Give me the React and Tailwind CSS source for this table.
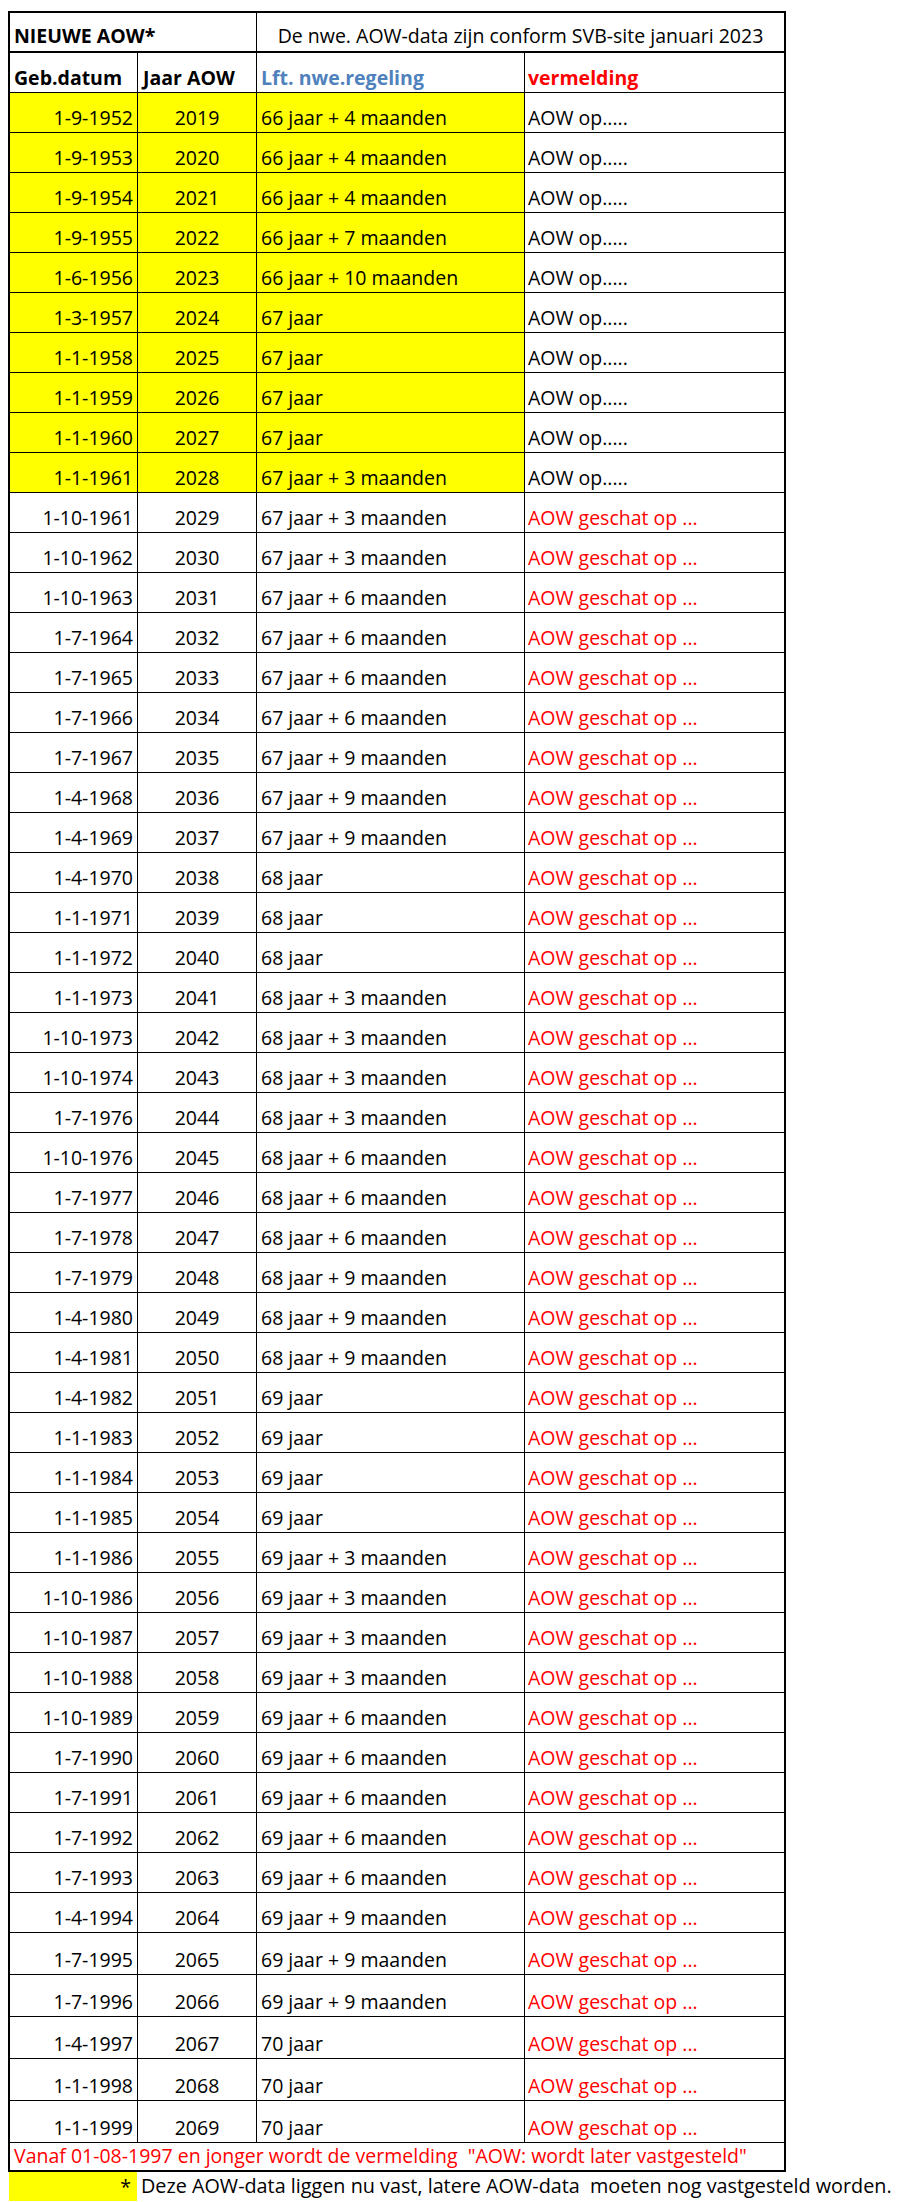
const ROWS = [
  ["1-9-1952", "2019", "66 jaar + 4 maanden"],
  ["1-9-1953", "2020", "66 jaar + 4 maanden"],
  ["1-9-1954", "2021", "66 jaar + 4 maanden"],
  ["1-9-1955", "2022", "66 jaar + 7 maanden"],
  ["1-6-1956", "2023", "66 jaar + 10 maanden"],
  ["1-3-1957", "2024", "67 jaar"],
  ["1-1-1958", "2025", "67 jaar"],
  ["1-1-1959", "2026", "67 jaar"],
  ["1-1-1960", "2027", "67 jaar"],
  ["1-1-1961", "2028", "67 jaar + 3 maanden"],
  ["1-10-1961", "2029", "67 jaar + 3 maanden"],
  ["1-10-1962", "2030", "67 jaar + 3 maanden"],
  ["1-10-1963", "2031", "67 jaar + 6 maanden"],
  ["1-7-1964", "2032", "67 jaar + 6 maanden"],
  ["1-7-1965", "2033", "67 jaar + 6 maanden"],
  ["1-7-1966", "2034", "67 jaar + 6 maanden"],
  ["1-7-1967", "2035", "67 jaar + 9 maanden"],
  ["1-4-1968", "2036", "67 jaar + 9 maanden"],
  ["1-4-1969", "2037", "67 jaar + 9 maanden"],
  ["1-4-1970", "2038", "68 jaar"],
  ["1-1-1971", "2039", "68 jaar"],
  ["1-1-1972", "2040", "68 jaar"],
  ["1-1-1973", "2041", "68 jaar + 3 maanden"],
  ["1-10-1973", "2042", "68 jaar + 3 maanden"],
  ["1-10-1974", "2043", "68 jaar + 3 maanden"],
  ["1-7-1976", "2044", "68 jaar + 3 maanden"],
  ["1-10-1976", "2045", "68 jaar + 6 maanden"],
  ["1-7-1977", "2046", "68 jaar + 6 maanden"],
  ["1-7-1978", "2047", "68 jaar + 6 maanden"],
  ["1-7-1979", "2048", "68 jaar + 9 maanden"],
  ["1-4-1980", "2049", "68 jaar + 9 maanden"],
  ["1-4-1981", "2050", "68 jaar + 9 maanden"],
  ["1-4-1982", "2051", "69 jaar"],
  ["1-1-1983", "2052", "69 jaar"],
  ["1-1-1984", "2053", "69 jaar"],
  ["1-1-1985", "2054", "69 jaar"],
  ["1-1-1986", "2055", "69 jaar + 3 maanden"],
  ["1-10-1986", "2056", "69 jaar + 3 maanden"],
  ["1-10-1987", "2057", "69 jaar + 3 maanden"],
  ["1-10-1988", "2058", "69 jaar + 3 maanden"],
  ["1-10-1989", "2059", "69 jaar + 6 maanden"],
  ["1-7-1990", "2060", "69 jaar + 6 maanden"],
  ["1-7-1991", "2061", "69 jaar + 6 maanden"],
  ["1-7-1992", "2062", "69 jaar + 6 maanden"],
  ["1-7-1993", "2063", "69 jaar + 6 maanden"],
  ["1-4-1994", "2064", "69 jaar + 9 maanden"],
  ["1-7-1995", "2065", "69 jaar + 9 maanden"],
  ["1-7-1996", "2066", "69 jaar + 9 maanden"],
  ["1-4-1997", "2067", "70 jaar"],
  ["1-1-1998", "2068", "70 jaar"],
  ["1-1-1999", "2069", "70 jaar"],
];

// first 10 rows are fixed (yellow), the rest are estimates
const FIXED = 10;

export default function App() {
  return (
    <div className="bg-white pt-[11px] font-['Open_Sans',sans-serif] text-[19.5px] leading-normal text-black">
      <div className="ml-2 w-[778px] border-2 border-black">
        <div className="flex h-[40px] border-b-2 border-black">
          <div className="flex w-[247px] items-end border-r border-black pb-px pl-1 font-bold">
            NIEUWE AOW*
          </div>
          <div className="flex flex-1 items-end justify-center pb-px">
            De nwe. AOW-data zijn conform SVB-site januari 2023
          </div>
        </div>

        <div className="flex h-[40px] border-b border-black font-bold">
          <div className="flex w-[128px] items-end border-r border-black pl-1">Geb.datum</div>
          <div className="flex w-[119px] items-end border-r border-black pl-[5px]">Jaar AOW</div>
          <div className="flex w-[268px] items-end border-r border-black pl-1 text-[#4f81bd]">
            Lft. nwe.regeling
          </div>
          <div className="flex flex-1 items-end pl-[3px] text-[#ff0000]">vermelding</div>
        </div>

        {ROWS.map(([born, year, age], i) => {
          const fixed = i < FIXED;
          const bg = fixed ? "bg-[#ffff00]" : "";
          return (
            <div
              key={year}
              className={`flex border-b border-black ${i >= 46 ? "h-[42px]" : "h-[40px]"}`}
            >
              <div className={`flex w-[128px] items-end justify-end border-r border-black pr-1 ${bg}`}>
                {born}
              </div>
              <div className={`flex w-[119px] items-end justify-center border-r border-black ${bg}`}>
                {year}
              </div>
              <div className={`flex w-[268px] items-end border-r border-black pl-1 ${bg}`}>{age}</div>
              <div className={`flex flex-1 items-end pl-[3px] ${fixed ? "" : "text-[#ff0000]"}`}>
                {fixed ? "AOW op....." : "AOW geschat op ..."}
              </div>
            </div>
          );
        })}

        <div className="flex h-[27px] items-end pl-1 text-[#ff0000]">
          <span className="whitespace-pre">
            Vanaf 01-08-1997 en jonger wordt de vermelding  "AOW: wordt later vastgesteld"
          </span>
        </div>
      </div>

      <div className="flex h-[29px] items-end">
        <div className="ml-[9px] flex h-full w-[128px] items-end justify-end bg-[#ffff00] pr-[6px]">*</div>
        <span className="whitespace-pre pl-1 text-[19.8px]">
          Deze AOW-data liggen nu vast, latere AOW-data  moeten nog vastgesteld worden.
        </span>
      </div>
    </div>
  );
}
